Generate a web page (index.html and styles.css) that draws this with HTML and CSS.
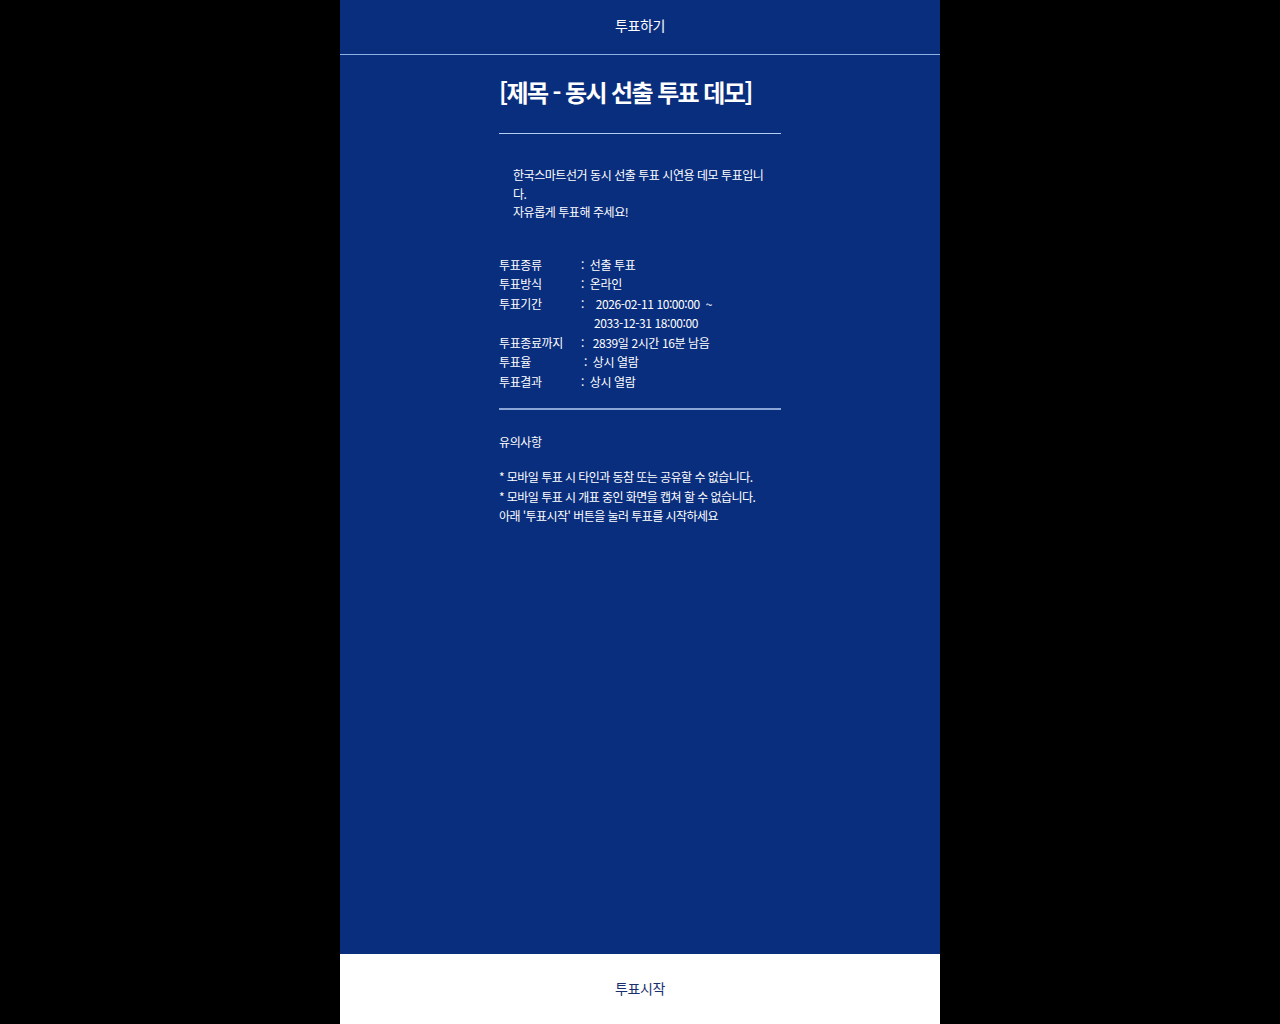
FILE: index.html
```html
<!DOCTYPE html>
<html lang="ko">
<head>
<meta charset="utf-8">
<title>투표하기</title>
<link rel="stylesheet" href="styles.css">
</head>
<body>
<div class="app">
  <header class="topbar">투표하기</header>
  <main class="content">
    <div class="column">
      <h1 class="title">[제목 - 동시 선출 투표 데모]</h1>
      <hr class="rule-thin">
      <p class="desc">한국스마트선거 동시 선출 투표 시연용 데모 투표입니다.<br>자유롭게 투표해 주세요!</p>
      <dl class="info">
        <div class="row"><dt>투표종류</dt><dd>:&nbsp; 선출 투표</dd></div>
        <div class="row"><dt>투표방식</dt><dd>:&nbsp; 온라인</dd></div>
        <div class="row"><dt>투표기간</dt><dd>:&nbsp;&nbsp;&nbsp; 2026-02-11 10:00:00 &nbsp;~<br><span class="cont">2033-12-31 18:00:00</span></dd></div>
        <div class="row"><dt>투표종료까지</dt><dd>:&nbsp;&nbsp; 2839일 2시간 16분 남음</dd></div>
        <div class="row"><dt>투표율</dt><dd class="shift">:&nbsp; 상시 열람</dd></div>
        <div class="row"><dt>투표결과</dt><dd>:&nbsp; 상시 열람</dd></div>
      </dl>
      <hr class="rule-thick">
      <p class="notice-title">유의사항</p>
      <p class="notes">* 모바일 투표 시 타인과 동참 또는 공유할 수 없습니다.<br>* 모바일 투표 시 개표 중인 화면을 캡쳐 할 수 없습니다.<br>아래 '투표시작' 버튼을 눌러 투표를 시작하세요</p>
    </div>
  </main>
  <footer class="bottombar"><button class="start-btn" type="button">투표시작</button></footer>
</div>
</body>
</html>
```
FILE: styles.css
```css
html, body {
  margin: 0;
  padding: 0;
  background: #000;
  height: 100%;
}
body {
  font-family: "Noto Sans CJK KR", "Noto Sans", sans-serif;
  color: #ffffff;
}
.app {
  width: 600px;
  height: 1024px;
  margin: 0 auto;
  display: flex;
  flex-direction: column;
  background: #0a2e7e;
}
.topbar {
  height: 55px;
  box-sizing: border-box;
  padding-bottom: 4px;
  border-bottom: 1px solid #8fb2e4;
  display: flex;
  align-items: center;
  justify-content: center;
  font-size: 14px;
  letter-spacing: -0.4px;
  color: #fff;
}
.content {
  flex: 1;
  display: flex;
  justify-content: center;
}
.column {
  width: 282px;
}
.title {
  margin: 22px 0 0;
  font-size: 24px;
  line-height: 30px;
  font-weight: 700;
  letter-spacing: -1.6px;
}
.rule-thin {
  margin: 26px 0 0;
  border: 0;
  height: 1px;
  background: #b5cdf0;
}
.desc {
  margin: 32px 0 0;
  padding: 0 14px;
  font-size: 12px;
  line-height: 18.5px;
  letter-spacing: -0.45px;
  word-break: break-all;
}
.info {
  margin: 33px 0 0;
  font-size: 12px;
  line-height: 19.5px;
  letter-spacing: -0.4px;
}
.row {
  display: flex;
}
.row dt {
  width: 82px;
  flex: none;
}
.row dd {
  margin: 0;
}
.row dd.shift {
  padding-left: 3px;
}
.cont {
  padding-left: 13px;
}
.rule-thick {
  margin: 17px 0 0;
  border: 0;
  height: 2px;
  background: #8aa6d6;
}
.notice-title {
  margin: 22px 0 0;
  font-size: 12px;
  line-height: 19.5px;
  letter-spacing: -0.4px;
}
.notes {
  margin: 15.5px 0 0;
  font-size: 12px;
  line-height: 19.5px;
  letter-spacing: -0.55px;
}
.bottombar {
  height: 70px;
  background: #fff;
  display: flex;
}
.start-btn {
  flex: 1;
  border: 0;
  background: #fff;
  font-family: "Noto Sans CJK KR", "Noto Sans", sans-serif;
  font-size: 14px;
  letter-spacing: -0.4px;
  color: #1a2f6e;
  padding: 0 0 3px;
  cursor: pointer;
}
```
